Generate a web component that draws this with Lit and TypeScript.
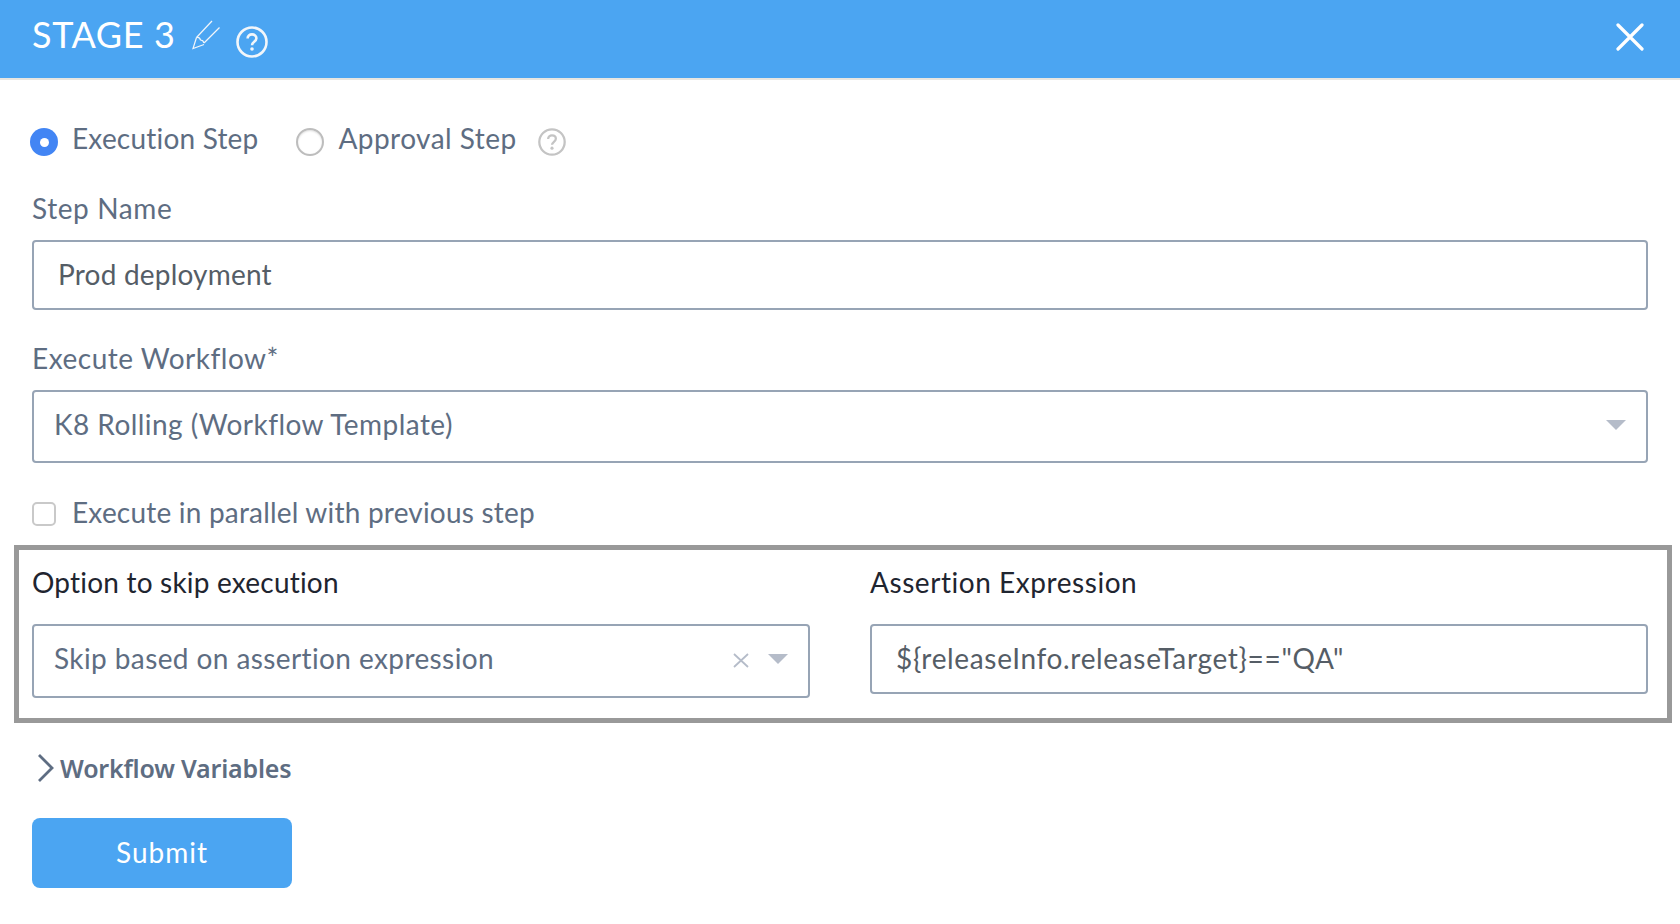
import { LitElement, html, css } from "lit";
import { customElement } from "lit/decorators.js";

const help = (cls: string) => html`<svg class=${cls} viewBox="0 0 32 32" fill="none">
  <circle cx="16" cy="16" r="14.5" stroke="currentColor" stroke-width="2.6"></circle>
  <path d="M11.6 12.6c0-2.6 2-4.2 4.4-4.2s4.4 1.5 4.4 3.9c0 3.4-4.4 3.500-4.4 6.900" stroke="currentColor" stroke-width="2.6" fill="none"></path>
  <circle cx="16" cy="23" r="1.8" fill="currentColor"></circle>
</svg>`;

const arrow = html`<svg class="arrow" viewBox="0 0 20 10"><path d="M0 0H20L10 10Z" fill="#b5bcc9"></path></svg>`;

@customElement("app-root")
export class AppRoot extends LitElement {
  static styles = css`
    :host {
      display: block;
      width: 1680px;
      height: 924px;
      overflow: hidden;
      background: #fff;
      font-family: "Lato", "Open Sans", sans-serif;
      font-size: 28px;
      letter-spacing: 0.3px;
      color: #5e6d82;
    }
    * { box-sizing: border-box; }
    .header {
      height: 80px;
      background: #4ba5f2;
      border-bottom: 2px solid #e8e6e1;
      display: flex;
      align-items: center;
      padding: 0 36px 0 32px;
      color: #fff;
    }
    .title { font-size: 36px; letter-spacing: 0.6px; line-height: 72px; margin-top: -10px; }
    .pencil { width: 30px; height: 30px; margin: -8px 0 0 16px; }
    .help-head { width: 32px; height: 32px; margin: 6px 0 0 15px; color: #f2f6fa; }
    .close { width: 28px; height: 28px; margin: -4px 0 0 auto; }
    .body { padding: 48px 32px 0 32px; }
    .radios { display: flex; align-items: center; height: 28px; margin-left: -2px; }
    .radio { width: 28px; height: 28px; border-radius: 50%; flex: none; }
    .radio.on { background: #4285f4; display: flex; align-items: center; justify-content: center; }
    .radio.on::after { content: ""; width: 9px; height: 9px; border-radius: 50%; background: #fff; }
    .radio.off { border: 2px solid #bdbdbd; box-shadow: inset 0 1px 2px #ddd; }
    .radio-label { line-height: 28px; margin: -8px 0 0 14px; white-space: nowrap; letter-spacing: 0.2px; }
    .radio-label.second { letter-spacing: 0.45px; }
    .first { margin-right: 38px; }
    .help-small { width: 28px; height: 28px; margin-left: 21px; color: #c4c4c4; }
    .label { display: block; line-height: 34px; height: 34px; }
    .label.l1 { margin-top: 35px; margin-bottom: 15px; letter-spacing: 0.6px; }
    .label.l2 { margin-top: 31px; margin-bottom: 15px; letter-spacing: 0.5px; }
    .control {
      border: 2px solid #97a4b5;
      border-radius: 4px;
      display: flex;
      align-items: center;
      background: #fff;
    }
    .input-a { height: 70px; padding: 0 24px; color: #555d66; }
    .select-a { height: 73px; padding: 0 20px; }
    .select-b { height: 74px; padding: 0 20px; }
    .input-b { height: 70px; padding: 0 24px; color: #555d66; }
    .control-text { flex: 1; white-space: nowrap; }
    .input-a .control-text { margin-top: -3px; letter-spacing: 0.2px; }
    .select-a .control-text { margin-top: -5px; letter-spacing: 0.45px; }
    .select-b .control-text { margin-top: -7px; letter-spacing: 0.4px; }
    .input-b .control-text { margin-top: -3px; letter-spacing: 0.66px; }
    .arrow { width: 20px; height: 10px; flex: none; margin-top: -4px; }
    .x { width: 18px; height: 15px; margin: -2px 18px 0 0; flex: none; }
    .check-row { display: flex; align-items: center; height: 24px; margin-top: 39px; }
    .check { width: 24px; height: 24px; border: 2px solid #c9c9c9; border-radius: 5px; flex: none; }
    .check-label { margin-left: 16px; line-height: 24px; margin-top: -4px; white-space: nowrap; letter-spacing: 0.2px; }
    .box {
      margin: 19px -24px 0 -18px;
      height: 178px;
      border: 5px solid #999;
      padding: 0 19px 0 13px;
      display: grid;
      grid-template-columns: 778px 1fr;
      column-gap: 60px;
      align-items: start;
    }
    .box .label { margin-top: 15px; margin-bottom: 25px; color: #1f2530; letter-spacing: 0.2px; }
    .box .label.wide { letter-spacing: 0.55px; }
    .toggle { display: flex; align-items: center; height: 34px; margin-top: 28px; }
    .chev { width: 18px; height: 30px; margin-left: 5px; flex: none; }
    .toggle-text {
      font-family: "Noto Sans", sans-serif;
      font-weight: 600;
      font-size: 25px;
      letter-spacing: -0.2px;
      margin-left: 5px;
      white-space: nowrap;
    }
    .submit {
      display: flex;
      align-items: center;
      justify-content: center;
      width: 260px;
      height: 70px;
      margin-top: 33px;
      background: #4ba5f2;
      border-radius: 8px;
      color: #fff;
      border: 0;
      font: inherit;
      letter-spacing: 1px;
      padding: 0 0 2px;
    }
  `;

  render() {
    return html`
      <div class="header">
        <span class="title">STAGE 3</span>
        <svg class="pencil" viewBox="0 0 30 30" fill="none" stroke="#f2f6fa" stroke-width="1.2">
          <path d="M21 1L5.500 17.500"></path>
          <path d="M28.500 7.500L13 23"></path>
          <path d="M5.500 17.500L2 28.500L13 24.500"></path>
          <path d="M5.500 17.500C8 17 9 18 9.500 20C11 20 12.500 21 13 23"></path>
        </svg>
        ${help("help-head")}
        <svg class="close" viewBox="0 0 28 28" fill="none" stroke="#fff" stroke-width="3.2" stroke-linecap="round">
          <path d="M2 2L26 26M26 2L2 26"></path>
        </svg>
      </div>
      <div class="body">
        <div class="radios">
          <span class="radio on"></span>
          <span class="radio-label first">Execution Step</span>
          <span class="radio off"></span>
          <span class="radio-label second">Approval Step</span>
          ${help("help-small")}
        </div>
        <label class="label l1">Step Name</label>
        <div class="control input-a"><span class="control-text">Prod deployment</span></div>
        <label class="label l2">Execute Workflow*</label>
        <div class="control select-a">
          <span class="control-text">K8 Rolling (Workflow Template)</span>
          ${arrow}
        </div>
        <div class="check-row">
          <span class="check"></span>
          <span class="check-label">Execute in parallel with previous step</span>
        </div>
        <div class="box">
          <div>
            <label class="label">Option to skip execution</label>
            <div class="control select-b">
              <span class="control-text">Skip based on assertion expression</span>
              <svg class="x" viewBox="0 0 18 15" fill="none" stroke="#b5bcc9" stroke-width="1.8"><path d="M2 1L16 14M16 1L2 14"></path></svg>
              ${arrow}
            </div>
          </div>
          <div>
            <label class="label wide">Assertion Expression</label>
            <div class="control input-b"><span class="control-text">\${releaseInfo.releaseTarget}=="QA"</span></div>
          </div>
        </div>
        <div class="toggle">
          <svg class="chev" viewBox="0 0 18 30" fill="none" stroke="#5e6d82" stroke-width="2.800"><path d="M2 2L15 15L2 28"></path></svg>
          <span class="toggle-text">Workflow Variables</span>
        </div>
        <button class="submit">Submit</button>
      </div>
    `;
  }
}
